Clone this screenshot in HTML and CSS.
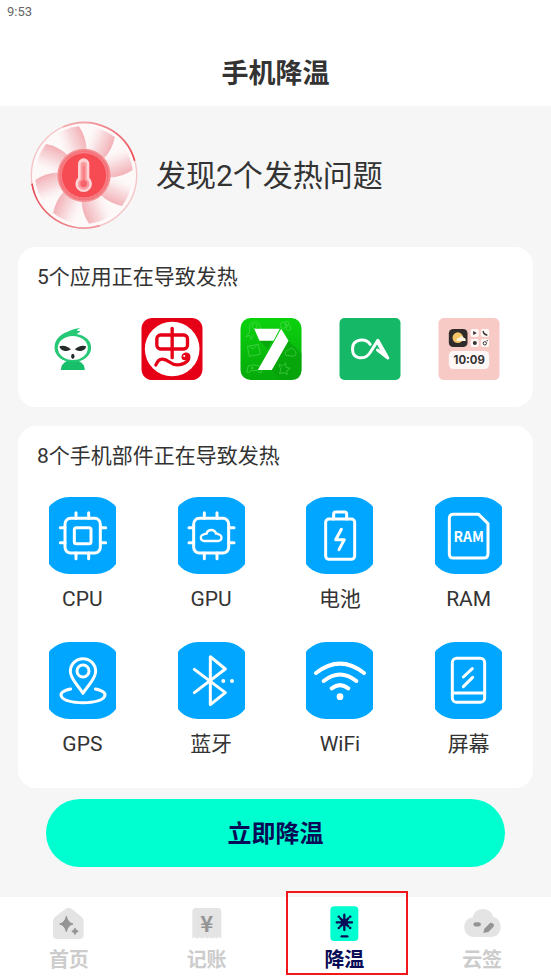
FILE: index.html
```html
<!DOCTYPE html>
<html lang="zh-CN">
<head>
  <meta charset="UTF-8" />
  <meta name="viewport" content="width=device-width, initial-scale=1" />
  <title>手机降温</title>
  <link rel="stylesheet" href="styles.css">
</head>
<body>

  <header>
    <div class="status-bar">9:53</div>
    <h1>手机降温</h1>
  </header>

  <main>
    <section class="summary">
      <svg class="fan" viewBox="31 31 324 324" aria-hidden="true">
        <defs>
          <linearGradient id="blade-fill" gradientUnits="userSpaceOnUse" x1="196" y1="78" x2="120" y2="108">
            <stop offset="0" stop-color="#f2adb3" />
            <stop offset="0.5" stop-color="#f6ced2" stop-opacity="0.75" />
            <stop offset="1" stop-color="#fbeeef" stop-opacity="0" />
          </linearGradient>
          <linearGradient id="arc-right" gradientUnits="userSpaceOnUse" x1="190" y1="35" x2="345" y2="150">
            <stop offset="0" stop-color="#f3a4a9" />
            <stop offset="1" stop-color="#ec4a54" />
          </linearGradient>
          <linearGradient id="arc-left" gradientUnits="userSpaceOnUse" x1="37" y1="218" x2="200" y2="352">
            <stop offset="0" stop-color="#e84650" />
            <stop offset="1" stop-color="#f0979d" />
          </linearGradient>
          <path id="blade" d="M201 118 Q199 78 178 47 Q140 51 104 76 L134 142 Z" fill="url(#blade-fill)" />
        </defs>
        <circle cx="193" cy="194" r="158" fill="#fdf9f9" stroke="#f6c3c6" stroke-width="4" />
        <use href="#blade" />
        <use href="#blade" transform="rotate(45 193 193)" />
        <use href="#blade" transform="rotate(90 193 193)" />
        <use href="#blade" transform="rotate(135 193 193)" />
        <use href="#blade" transform="rotate(180 193 193)" />
        <use href="#blade" transform="rotate(225 193 193)" />
        <use href="#blade" transform="rotate(270 193 193)" />
        <use href="#blade" transform="rotate(315 193 193)" />
        <path d="M130 49 A158 158 0 0 1 345 150" fill="none" stroke="url(#arc-right)" stroke-width="5" />
        <path d="M37 219 A158 158 0 0 0 240 345" fill="none" stroke="url(#arc-left)" stroke-width="5" />
        <circle cx="193" cy="194" r="80" fill="#f58e93" />
        <circle cx="193" cy="194" r="75" fill="#f4747b" />
        <circle cx="193" cy="194" r="68" fill="#f74b54" stroke="#f9858b" stroke-width="3" />
        <path d="M175 160 a17 17 0 0 1 34 0 v41 a25 25 0 1 1 -34 0 Z" fill="#fdd3d5" />
        <path d="M183 162 a9 9 0 0 1 18 0 v44 a17 17 0 1 1 -18 0 Z" fill="#fa9a9f" />
        <path d="M192 168 v48" stroke="#f97a81" stroke-width="6" stroke-linecap="round" />
        <circle cx="192" cy="219" r="10" fill="#f8626a" />
      </svg>
      <p>发现2个发热问题</p>
    </section>

    <section class="card">
      <h2>5个应用正在导致发热</h2>
      <ul class="apps">
        <li>
          <svg viewBox="36 54 183 186" aria-label="应用1">
            <path d="M91 210 q0 -18 18 -27 h36 q18 9 18 27 Z" fill="#18bf6b" />
            <path d="M72 143 C72 118 92 102 108 97 Q126 86 150 84 Q140 88 139 92 Q145 94 150 92 Q146 99 138 102 C165 107 182 122 182 143 C182 167 158 186 127 186 C96 186 72 167 72 143 Z" fill="#25c875" />
            <ellipse cx="127" cy="144" rx="45" ry="36" fill="#fff" />
            <path d="M87 139 q18 -6 34 9 q-8 7 -21 4 q-12 -3 -13 -13 Z" fill="#252b2a" />
            <path d="M167 139 q-18 -6 -34 9 q8 7 21 4 q12 -3 13 -13 Z" fill="#252b2a" />
            <ellipse cx="127" cy="169" rx="5" ry="8" fill="#252b2a" />
          </svg>
        </li>
        <li>
          <svg viewBox="333 54 183 186" aria-label="应用2">
            <rect x="333" y="54" width="183" height="186" rx="32" fill="#e60017" />
            <circle cx="425" cy="147" r="82" fill="#fff" />
            <g fill="none" stroke="#e60017" stroke-width="10" stroke-linecap="round" stroke-linejoin="round">
              <rect x="379" y="105" width="92" height="42" rx="11" />
              <path d="M425 85 V173" />
              <path d="M376 195 C386 170 403 176 417 186 C440 204 475 190 475 171 C475 159 458 160 459 171" />
            </g>
            <circle cx="463" cy="171" r="10" fill="#e60017" />
            <circle cx="461" cy="168" r="3" fill="#fff" />
          </svg>
        </li>
        <li>
          <svg viewBox="30 54 183 186" aria-label="应用3">
            <defs>
              <linearGradient id="green" x1="0" y1="0" x2="0" y2="1">
                <stop offset="0" stop-color="#0bd20d" />
                <stop offset="1" stop-color="#06a90a" />
              </linearGradient>
            </defs>
            <rect x="30" y="54" width="183" height="186" rx="30" fill="url(#green)" />
            <path d="M174 122 L213 160 V210 Q213 240 183 240 H152 L124 210 Z" fill="#079d0b" opacity="0.6" />
            <path d="M87 122 L112 146 L124 122 Z" fill="#079d0b" opacity="0.7" />
            <g fill="none" stroke="#62dc60" stroke-width="2" opacity="0.8">
              <path d="M58 96 q-6 -28 14 -32 q20 2 18 28 M58 96 l-12 14 l12 -4 l4 12 l8 -14" />
              <circle cx="72" cy="78" r="8" />
              <path d="M51 139 l33 -6 l5 30 l-33 6 Z M58 138 q10 18 20 -4" />
              <path d="M53 198 q17 -7 35 0 l6 18 q-4 6 -12 -4 h-20 q-9 10 -13 4 Z M61 204 h8 M65 200 v8" />
              <circle cx="158" cy="76" r="9" /><circle cx="174" cy="84" r="7" /><circle cx="169" cy="70" r="6" />
              <path d="M166 166 q-6 -14 8 -15 q8 -14 18 0 q10 12 -2 18 Z" />
              <path d="M145 194 l12 3 l8 -8 l2 13 l12 3 l-10 7 l1 11 l-10 -5 l-13 3 l4 -13 Z" />
            </g>
            <path d="M71 86 H148 L129 122 H87 Z" fill="#fff" />
            <path d="M152 86 L174 122 L124 210 H82 L132 122 Z" fill="#fff" />
          </svg>
        </li>
        <li>
          <svg viewBox="327 54 183 186" aria-label="应用4">
            <rect x="327" y="54" width="183" height="186" rx="15" fill="#14b866" />
            <g fill="none" stroke="#fff" stroke-width="9" stroke-linecap="round" stroke-linejoin="round">
              <path d="M419 133 C406 114 366 115 366 147 C366 180 403 180 418 159 L442 121 L472 174 L441 150" />
              <path d="M443 130 L457 155" />
            </g>
          </svg>
        </li>
        <li>
          <svg viewBox="625 54 183 186" aria-label="应用5">
            <rect x="625" y="54" width="183" height="186" rx="16" fill="#f7cac6" />
            <rect x="656" y="87" width="56" height="54" rx="13" fill="#302b2b" />
            <circle cx="683" cy="113" r="16" fill="#f5c467" />
            <path d="M680 123 q-2 -10 8 -10 q6 -10 13 0 q8 2 5 10 Z" fill="#fff3dd" />
            <g fill="#fff8f7">
              <rect x="721" y="87" width="25" height="24" rx="6" />
              <rect x="752" y="87" width="25" height="24" rx="6" />
              <rect x="721" y="117" width="25" height="24" rx="6" />
              <rect x="752" y="117" width="25" height="24" rx="6" />
              <rect x="656" y="153" width="121" height="54" rx="14" />
            </g>
            <path d="M729 93 l11 6 l-11 6 Z" fill="#333" />
            <path d="M759 94 q1 9 11 11" fill="none" stroke="#333" stroke-width="4" stroke-linecap="round" />
            <circle cx="734" cy="129" r="6" fill="#333" />
            <circle cx="764" cy="130" r="5" fill="none" stroke="#333" stroke-width="3" />
            <circle cx="771" cy="122" r="2" fill="#333" />
            <text class="clock" x="717" y="192" text-anchor="middle">10:09</text>
          </svg>
        </li>
      </ul>
    </section>

    <section class="card parts-card">
      <h2>8个手机部件正在导致发热</h2>
      <ul class="parts">
        <li>
          <svg viewBox="57 51 201 231" aria-hidden="true">
            <rect class="tile" x="42" y="51" width="231" height="231" rx="75" />
            <g class="line">
              <rect x="105" y="115" width="106" height="104" rx="17" />
              <rect x="133" y="143" width="50" height="48" rx="6" />
              <path d="M138 98 v17 M176 98 v17 M138 219 v17 M176 219 v17 M91 143 h14 M91 188 h14 M211 143 h16 M211 188 h16" />
            </g>
          </svg>
          <span>CPU</span>
        </li>
        <li>
          <svg viewBox="444 51 201 231" aria-hidden="true">
            <rect class="tile" x="429" y="51" width="231" height="231" rx="75" />
            <g class="line">
              <rect x="491" y="115" width="105" height="104" rx="17" />
              <path d="M523 98 v17 M561 98 v17 M523 219 v17 M561 219 v17 M477 143 h14 M477 188 h14 M596 143 h16 M596 188 h16" />
              <path class="thin" d="M523 183 a10 10 0 0 1 -1 -20 q4 -3 8 -2 q2 -11 14 -11 q11 0 14 11 q5 -1 7 2 a10 10 0 0 1 -1 20 Z" />
            </g>
          </svg>
          <span>GPU</span>
        </li>
        <li>
          <svg viewBox="48 51 201 231" aria-hidden="true">
            <rect class="tile" x="33" y="51" width="231" height="231" rx="75" />
            <g class="line">
              <rect x="107" y="117" width="87" height="121" rx="10" />
              <path d="M131 117 v-15 q0 -6 6 -6 h27 q6 0 6 6 v15" />
              <path d="M154 148 L137 179 H163 L147 209" />
            </g>
          </svg>
          <span>电池</span>
        </li>
        <li>
          <svg viewBox="435 51 201 231" aria-hidden="true">
            <rect class="tile" x="420" y="51" width="231" height="231" rx="75" />
            <path class="line" d="M490 103 H566 L594 131 V221 Q594 234 581 234 H490 Q478 234 478 221 V116 Q478 103 490 103 Z" />
            <text class="ram" x="536" y="185" text-anchor="middle">RAM</text>
          </svg>
          <span>RAM</span>
        </li>
        <li>
          <svg viewBox="57 36 201 231" aria-hidden="true">
            <rect class="tile" x="42" y="36" width="231" height="231" rx="75" />
            <g class="line">
              <path d="M159 190 C145 166 121 148 121 124 A38 38 0 0 1 197 124 C197 148 173 166 159 190 Z" />
              <circle cx="159" cy="123" r="18" />
              <path d="M122 177 C75 185 84 217 159 218 C234 217 243 185 196 177" />
            </g>
          </svg>
          <span>GPS</span>
        </li>
        <li>
          <svg viewBox="444 36 201 231" aria-hidden="true">
            <rect class="tile" x="429" y="36" width="231" height="231" rx="75" />
            <path class="line" d="M493 118 L586 188 L541 224 V80 L586 117 L493 188" />
            <circle cx="580" cy="153" r="6" fill="#fff" />
            <circle cx="606" cy="153" r="6" fill="#fff" />
          </svg>
          <span>蓝牙</span>
        </li>
        <li>
          <svg viewBox="48 36 201 231" aria-hidden="true">
            <rect class="tile" x="33" y="36" width="231" height="231" rx="75" />
            <g class="line wifi">
              <path d="M78 129 Q150 73 222 129" />
              <path d="M101 153 Q150 114 199 153" />
              <path d="M125 175 Q150 156 175 175" />
            </g>
            <circle cx="150" cy="200" r="10" fill="#fff" />
          </svg>
          <span>WiFi</span>
        </li>
        <li>
          <svg viewBox="435 36 201 231" aria-hidden="true">
            <rect class="tile" x="420" y="36" width="231" height="231" rx="75" />
            <g class="line">
              <rect x="487" y="85" width="97" height="132" rx="13" />
              <path d="M487 189 H584" />
              <path d="M520 141 L547 116 M520 170 L548 142" />
            </g>
          </svg>
          <span>屏幕</span>
        </li>
      </ul>
    </section>

    <button type="button" class="cool-btn">立即降温</button>
  </main>

  <nav>
    <a href="#home">
      <svg viewBox="150 75 111 108" aria-hidden="true">
        <path d="M195 88 Q206 79 217 88 L246 112 Q251 117 251 123 V165 Q251 177 239 177 H171 Q159 177 159 165 V123 Q159 117 164 112 Z" fill="#e4e4e4" />
        <path d="M199 109 Q203 128 219 132 Q203 136 199 155 Q195 136 179 132 Q195 128 199 109 Z" fill="#949494" stroke="#949494" stroke-width="3" />
        <path d="M225 144 Q228 152 235 154 Q228 156 225 164 Q222 156 215 154 Q222 152 225 144 Z" fill="#949494" stroke="#949494" stroke-width="2" />
      </svg>
      <span>首页</span>
    </a>
    <a href="#bill">
      <svg viewBox="563 75 111 108" aria-hidden="true">
        <path d="M576 95 Q576 84 587 84 H652 Q663 84 663 95 V176 q-7 -7 -14 0 q-8 -7 -15 0 q-7 -7 -14 0 q-8 -7 -15 0 q-7 -7 -14 0 q-8 -7 -15 0 Z" fill="#e4e4e4" />
        <text class="yen" x="619" y="155" text-anchor="middle">¥</text>
      </svg>
      <span>记账</span>
    </a>
    <a href="#cool" class="active">
      <svg viewBox="152 75 111 108" aria-hidden="true">
        <rect x="165" y="79" width="84" height="104" rx="12" fill="#00ffd0" />
        <g stroke="#080b56" stroke-width="7" stroke-linecap="round">
          <path d="M207 104 V150 M184 127 H230 M195 115 L219 139 M219 115 L195 139" />
          <path d="M190 110 h1 M224 110 h1 M190 144 h1 M224 144 h1" />
          <path d="M199 169 H216" />
        </g>
        <circle cx="207" cy="127" r="11" fill="#080b56" />
      </svg>
      <span>降温</span>
    </a>
    <a href="#sign">
      <svg viewBox="565 75 111 108" aria-hidden="true">
        <path d="M596 171 C577 171 566 159 566 142 C566 125 576 114 591 112 C594 97 605 87 622 87 C638 87 649 96 653 111 C667 114 675 126 675 141 C675 159 664 171 645 171 Z" fill="#e4e4e4" />
        <path d="M600 133 H609" stroke="#949494" stroke-width="13" stroke-linecap="round" />
        <path d="M623 159 L626 146 L643 129 Q650 127 655 134 Q656 139 652 142 L638 156 Z" fill="#949494" />
      </svg>
      <span>云签</span>
    </a>
  </nav>

</body>
</html>
```

FILE: styles.css
```css
* {
  box-sizing: border-box;
}
body {
  font-family: Roboto, "Noto Sans CJK SC", sans-serif;
  margin: 0;
  min-height: 100vh;
  display: flex;
  flex-direction: column;
  background: #f6f6f6;
  color: #333;
}
h1, h2, p, ul {
  margin: 0;
  padding: 0;
}
ul {
  list-style: none;
}
svg {
  display: block;
}

header {
  background: #fff;
  padding-bottom: 12px;
}
.status-bar {
  padding: 0 7px;
  font-size: 13px;
  line-height: 24px;
  color: #666;
}
h1 {
  margin-top: 30px;
  font-size: 27px;
  line-height: 40px;
  text-align: center;
}

main {
  flex: 1;
  display: flex;
  flex-direction: column;
  padding: 0 18px 30px;
}
.summary {
  display: flex;
  align-items: center;
  gap: 18px;
  padding: 15px 12px 18px;
}
.fan {
  width: 108px;
  height: 108px;
}
.summary p {
  padding-top: 2px;
  font-size: 30px;
  line-height: 44px;
}

.card {
  background: #fff;
  border-radius: 18px;
  padding: 15px 0 27px;
  margin-bottom: 19px;
}
.card h2 {
  padding: 0 19px;
  font-size: 21px;
  line-height: 30px;
  font-weight: normal;
}
.apps {
  display: flex;
  justify-content: space-between;
  padding: 26px 33px 0 24px;
}
.apps svg {
  width: 62px;
  height: 62px;
}
.clock {
  font: bold 34px Inter, sans-serif;
  fill: #333;
}

.parts-card {
  margin-bottom: 11px;
}
.parts {
  display: grid;
  grid-template-columns: repeat(4, 1fr);
  row-gap: 26px;
  padding-top: 26px;
}
.parts li {
  display: flex;
  flex-direction: column;
  align-items: center;
  gap: 8px;
  font-size: 21px;
  line-height: 34px;
}
.parts svg {
  width: 67px;
  height: 77px;
}
.tile {
  fill: #00a6ff;
}
.line {
  fill: none;
  stroke: #fff;
  stroke-width: 9;
  stroke-linecap: round;
  stroke-linejoin: round;
}
.thin {
  stroke-width: 7;
}
.wifi {
  stroke-width: 12;
}
.ram {
  font: bold 42px "Noto Sans CJK SC", sans-serif;
  fill: #fff;
}

.cool-btn {
  margin: 0 28px;
  padding: 17px 0 15px;
  border: none;
  border-radius: 34px;
  background: #00ffd0;
  color: #080b56;
  font-family: inherit;
  font-size: 24px;
  line-height: 36px;
  font-weight: bold;
  cursor: pointer;
}

nav {
  display: grid;
  grid-template-columns: repeat(4, 1fr);
  padding: 8px 0 1px;
  background: #fff;
}
nav a {
  position: relative;
  display: flex;
  flex-direction: column;
  align-items: center;
  color: #ccc;
  font-size: 20px;
  line-height: 38px;
  font-weight: bold;
  text-decoration: none;
}
nav svg {
  width: 37px;
  height: 36px;
}
nav .active {
  color: #080b56;
}
.active::after {
  content: "";
  position: absolute;
  top: -14px;
  bottom: 4px;
  left: 10px;
  right: 5px;
  border: 2px solid #f01818;
}
.yen {
  font: bold 66px "Noto Sans CJK SC", sans-serif;
  fill: #949494;
}
```
